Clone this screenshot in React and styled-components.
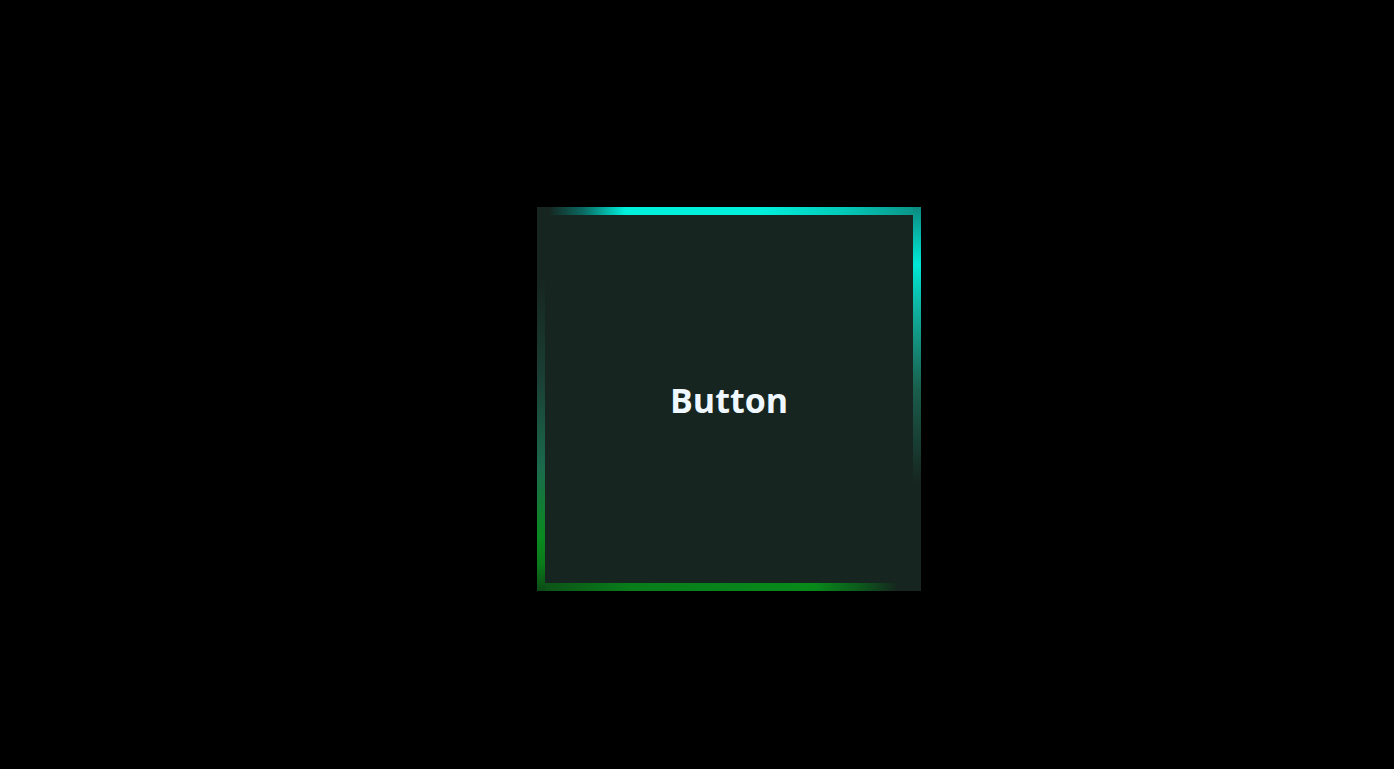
import React from "react";
import styled, { createGlobalStyle } from "styled-components";

const GlobalStyle = createGlobalStyle`
  html, body {
    margin: 0;
    padding: 0;
    background: #000;
  }
  #root {
    min-height: 100vh;
  }
`;

const Page = styled.main`
  box-sizing: border-box;
  min-height: 100vh;
  display: grid;
  place-items: center;
  padding: 29px 0 0 64px;
  background: #000;
`;

const GlowButton = styled.button`
  box-sizing: border-box;
  width: 384px;
  height: 384px;
  border: none;
  padding: 2px 0 0;
  cursor: pointer;
  display: flex;
  align-items: center;
  justify-content: center;
  color: #f0f8ff;
  font-family: "Open Sans", "Noto Sans", sans-serif;
  font-weight: 700;
  font-size: 34px;
  letter-spacing: 0;
  background:
    linear-gradient(
        to bottom,
        #0c8a80 0%,
        #00e8d6 15%,
        #0fb4a2 26%,
        #1a5c4a 48%,
        rgba(22, 37, 31, 0) 72%
      )
      right top / 8px 100% no-repeat,
    linear-gradient(
        to bottom,
        rgba(22, 37, 31, 0) 0%,
        rgba(22, 37, 31, 0) 18%,
        #1a3f34 45%,
        #1b6a4c 68%,
        #0a8a20 86%,
        #0a7a1a 93%,
        #0c4a16 100%
      )
      left top / 8px 100% no-repeat,
    linear-gradient(
        to right,
        rgba(22, 37, 31, 0) 0%,
        rgba(22, 37, 31, 0) 3%,
        #0a6a62 12%,
        #00f0dc 23%,
        #00f0dc 58%,
        #03c9b8 80%,
        #0b8f84 100%
      )
      left top / 100% 8px no-repeat,
    linear-gradient(
        to right,
        #0d4f17 0%,
        #087d1a 24%,
        #088a1a 72%,
        #0c5a1c 84%,
        rgba(22, 37, 31, 0) 94%
      )
      left bottom / 100% 8px no-repeat,
    #16251f;
`;

export default function App() {
  return (
    <>
      <GlobalStyle />
      <Page>
        <GlowButton type="button">Button</GlowButton>
      </Page>
    </>
  );
}
